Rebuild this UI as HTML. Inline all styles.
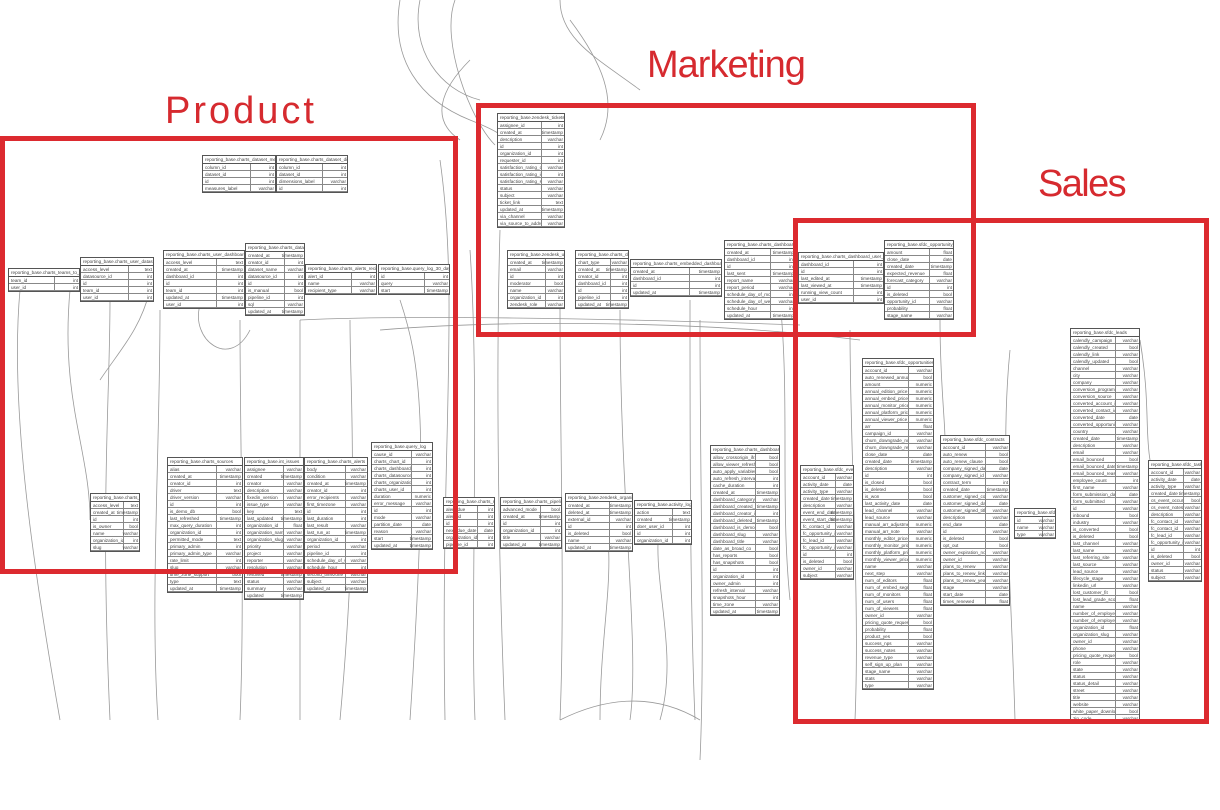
<!DOCTYPE html>
<html><head><meta charset="utf-8"><style>
html,body{margin:0;padding:0;background:#fff;width:1220px;height:810px;overflow:hidden;position:relative;font-family:"Liberation Sans",sans-serif}
svg{position:absolute;left:0;top:0}
.t{position:absolute;border:1px solid #555;background:#fff;font-size:4.6px;line-height:7px;color:#444;white-space:nowrap;overflow:hidden}
.h{height:7px;border-bottom:1px solid #555;padding-left:2px;overflow:hidden}
.b{position:relative;background:repeating-linear-gradient(to bottom,transparent 0 6px,#888 6px 7px)}
.c1{width:62%;padding-left:2px;border-right:1px solid #888;overflow:hidden}
.c2{position:absolute;right:1px;top:0;text-align:right}
.lbl{position:absolute;color:#d62a2f;font-size:38px;font-family:"Liberation Sans",sans-serif}
.box{position:absolute;border:5px solid #dc2a2f}
</style></head><body>
<svg width="1220" height="810" fill="none" stroke="#999" stroke-width="0.8">
<path d="M400 0 C390 60 420 100 470 120 S500 140 498 150"/>
<path d="M420 0 C410 50 440 90 480 100"/>
<path d="M455 0 C440 40 470 120 495 145"/>
<path d="M470 60 C440 90 430 120 460 140"/>
<path d="M560 0 C560 40 600 60 640 90"/>
<path d="M570 20 C600 60 620 100 600 140"/>
<path d="M440 160 C460 300 440 450 445 720"/>
<path d="M470 250 C480 400 470 600 475 720"/>
<path d="M500 230 C495 400 500 600 505 720"/>
<path d="M560 300 C560 450 565 600 560 720"/>
<path d="M620 310 C620 500 640 650 630 720"/>
<path d="M690 300 C690 450 690 600 695 720"/>
<path d="M700 320 C700 500 705 650 700 760"/>
<path d="M240 320 C240 450 245 600 240 720"/>
<path d="M160 310 C160 450 150 600 158 720"/>
<path d="M70 290 C60 400 90 450 90 520"/>
<path d="M20 290 C10 400 30 550 60 720"/>
<path d="M110 300 C110 400 100 500 110 720"/>
<path d="M300 320 C300 400 300 500 300 720"/>
<path d="M350 320 C350 400 360 500 340 720"/>
<path d="M400 300 C420 360 430 420 410 720"/>
<path d="M150 290 C140 330 120 350 100 380"/>
<path d="M200 305 C190 340 230 370 250 330"/>
<path d="M300 320 C400 315 600 318 800 325"/>
<path d="M380 330 C500 320 700 320 860 340"/>
<path d="M780 300 C790 400 780 500 790 600"/>
<path d="M850 330 C850 450 860 600 855 720"/>
<path d="M940 320 C940 380 945 420 945 440"/>
<path d="M1010 350 C1000 450 1010 550 1015 720"/>
<path d="M1140 340 C1150 400 1145 430 1150 460"/>
<path d="M560 720 C600 700 650 690 700 720"/>
<path d="M600 500 C620 560 600 620 600 720"/>
<path d="M660 520 C650 580 680 650 660 720"/>
</svg>

<div class="lbl" style="left:165px;top:90px;letter-spacing:3px">Product</div>
<div class="lbl" style="left:647px;top:44px;letter-spacing:-1px">Marketing</div>
<div class="lbl" style="left:1038px;top:163px;letter-spacing:-1.6px">Sales</div>

<div class="t" style="left:202px;top:155px;width:72px"><div class="h">reporting_base.charts_dataset_measures</div><div class="b"><div class="c1">column_id<br>dataset_id<br>id<br>measures_label</div><div class="c2">int<br>int<br>int<br>varchar</div></div></div>
<div class="t" style="left:276px;top:155px;width:70px"><div class="h">reporting_base.charts_dataset_dimensions</div><div class="b"><div class="c1">column_id<br>dataset_id<br>dimensions_label<br>id</div><div class="c2">int<br>int<br>varchar<br>int</div></div></div>
<div class="t" style="left:8px;top:268px;width:70px"><div class="h">reporting_base.charts_teams_to_users</div><div class="b"><div class="c1">team_id<br>user_id</div><div class="c2">int<br>int</div></div></div>
<div class="t" style="left:80px;top:257px;width:72px"><div class="h">reporting_base.charts_user_datasource_access</div><div class="b"><div class="c1">access_level<br>datasource_id<br>id<br>team_id<br>user_id</div><div class="c2">text<br>int<br>int<br>int<br>int</div></div></div>
<div class="t" style="left:163px;top:250px;width:80px"><div class="h">reporting_base.charts_user_dashboard_access</div><div class="b"><div class="c1">access_level<br>created_at<br>dashboard_id<br>id<br>team_id<br>updated_at<br>user_id</div><div class="c2">text<br>timestamp<br>int<br>int<br>int<br>timestamp<br>int</div></div></div>
<div class="t" style="left:245px;top:243px;width:58px"><div class="h">reporting_base.charts_datasets</div><div class="b"><div class="c1">created_at<br>creator_id<br>dataset_name<br>datasource_id<br>id<br>is_manual<br>pipeline_id<br>sql<br>updated_at</div><div class="c2">timestamp<br>int<br>varchar<br>int<br>int<br>bool<br>int<br>varchar<br>timestamp</div></div></div>
<div class="t" style="left:305px;top:264px;width:70px"><div class="h">reporting_base.charts_alerts_recipients</div><div class="b"><div class="c1">alert_id<br>name<br>recipient_type</div><div class="c2">int<br>varchar<br>varchar</div></div></div>
<div class="t" style="left:378px;top:264px;width:70px"><div class="h">reporting_base.query_log_30_day</div><div class="b"><div class="c1">id<br>query<br>start</div><div class="c2">int<br>varchar<br>timestamp</div></div></div>
<div class="t" style="left:90px;top:493px;width:48px"><div class="h">reporting_base.charts_alerts</div><div class="b"><div class="c1">access_level<br>created_at<br>id<br>is_owner<br>name<br>organization_id<br>slug</div><div class="c2">text<br>timestamp<br>int<br>bool<br>varchar<br>int<br>varchar</div></div></div>
<div class="t" style="left:167px;top:457px;width:74px"><div class="h">reporting_base.charts_sources</div><div class="b"><div class="c1">alias<br>created_at<br>creator_id<br>driver<br>driver_version<br>id<br>is_demo_db<br>last_refreshed<br>max_query_duration<br>organization_id<br>permitted_mode<br>primary_admin<br>primary_admin_type<br>rate_limit<br>slug<br>time_zone_support<br>type<br>updated_at</div><div class="c2">varchar<br>timestamp<br>int<br>text<br>varchar<br>int<br>bool<br>timestamp<br>int<br>int<br>text<br>int<br>varchar<br>int<br>varchar<br>bool<br>text<br>timestamp</div></div></div>
<div class="t" style="left:244px;top:457px;width:58px"><div class="h">reporting_base.int_issues</div><div class="b"><div class="c1">assignee<br>created<br>creator<br>description<br>fixedin_version<br>issue_type<br>key<br>last_updated<br>organization_id<br>organization_name<br>organization_slug<br>priority<br>project<br>reporter<br>resolution<br>resolved<br>status<br>summary<br>updated</div><div class="c2">varchar<br>timestamp<br>varchar<br>varchar<br>varchar<br>varchar<br>text<br>timestamp<br>float<br>varchar<br>varchar<br>varchar<br>varchar<br>varchar<br>varchar<br>timestamp<br>varchar<br>varchar<br>timestamp</div></div></div>
<div class="t" style="left:304px;top:457px;width:62px"><div class="h">reporting_base.charts_alerts</div><div class="b"><div class="c1">body<br>condition<br>created_at<br>creator_id<br>error_recipients<br>first_timezone<br>id<br>last_duration<br>last_result<br>last_run_at<br>organization_id<br>period<br>pipeline_id<br>schedule_day_of_week<br>schedule_hour<br>second_timezone<br>subject<br>updated_at</div><div class="c2">varchar<br>varchar<br>timestamp<br>int<br>varchar<br>varchar<br>int<br>int<br>varchar<br>timestamp<br>int<br>varchar<br>int<br>varchar<br>int<br>varchar<br>varchar<br>timestamp</div></div></div>
<div class="t" style="left:371px;top:442px;width:60px"><div class="h">reporting_base.query_log</div><div class="b"><div class="c1">cause_id<br>charts_chart_id<br>charts_dashboard_id<br>charts_datasource_id<br>charts_organization_id<br>charts_user_id<br>duration<br>error_message<br>id<br>mode<br>partition_date<br>reason<br>start<br>updated_at</div><div class="c2">varchar<br>int<br>int<br>int<br>int<br>int<br>numeric<br>varchar<br>int<br>varchar<br>date<br>varchar<br>timestamp<br>timestamp</div></div></div>
<div class="t" style="left:443px;top:497px;width:50px"><div class="h">reporting_base.charts_report</div><div class="b"><div class="c1">alert_due<br>alert_id<br>id<br>next_due_date<br>organization_id<br>pipeline_id</div><div class="c2">int<br>int<br>int<br>date<br>int<br>int</div></div></div>
<div class="t" style="left:500px;top:497px;width:60px"><div class="h">reporting_base.charts_pipelines</div><div class="b"><div class="c1">advanced_mode<br>created_at<br>id<br>organization_id<br>title<br>updated_at</div><div class="c2">bool<br>timestamp<br>int<br>int<br>varchar<br>timestamp</div></div></div>
<div class="t" style="left:565px;top:493px;width:66px"><div class="h">reporting_base.zendesk_organizations</div><div class="b"><div class="c1">created_at<br>deleted_at<br>external_id<br>id<br>is_deleted<br>name<br>updated_at</div><div class="c2">timestamp<br>timestamp<br>varchar<br>int<br>bool<br>varchar<br>timestamp</div></div></div>
<div class="t" style="left:634px;top:500px;width:56px"><div class="h">reporting_base.activity_log</div><div class="b"><div class="c1">action<br>created<br>doer_user_id<br>id<br>organization_id</div><div class="c2">text<br>timestamp<br>int<br>int<br>int</div></div></div>

<div class="t" style="left:497px;top:113px;width:66px"><div class="h">reporting_base.zendesk_tickets</div><div class="b"><div class="c1">assignee_id<br>created_at<br>description<br>id<br>organization_id<br>requester_id<br>satisfaction_rating_comment<br>satisfaction_rating_id<br>satisfaction_rating_score<br>status<br>subject<br>ticket_link<br>updated_at<br>via_channel<br>via_source_to_address</div><div class="c2">int<br>timestamp<br>varchar<br>int<br>int<br>int<br>varchar<br>int<br>varchar<br>varchar<br>varchar<br>text<br>timestamp<br>varchar<br>varchar</div></div></div>
<div class="t" style="left:507px;top:250px;width:56px"><div class="h">reporting_base.zendesk_users</div><div class="b"><div class="c1">created_at<br>email<br>id<br>moderator<br>name<br>organization_id<br>zendesk_role</div><div class="c2">timestamp<br>varchar<br>int<br>bool<br>varchar<br>int<br>varchar</div></div></div>
<div class="t" style="left:575px;top:250px;width:52px"><div class="h">reporting_base.charts_charts</div><div class="b"><div class="c1">chart_type<br>created_at<br>creator_id<br>dashboard_id<br>id<br>pipeline_id<br>updated_at</div><div class="c2">varchar<br>timestamp<br>int<br>int<br>int<br>int<br>timestamp</div></div></div>
<div class="t" style="left:630px;top:259px;width:90px"><div class="h">reporting_base.charts_embedded_dashboard_usage</div><div class="b"><div class="c1">created_at<br>dashboard_id<br>id<br>updated_at</div><div class="c2">timestamp<br>int<br>int<br>timestamp</div></div></div>
<div class="t" style="left:724px;top:240px;width:70px"><div class="h">reporting_base.charts_dashboard_reports</div><div class="b"><div class="c1">created_at<br>dashboard_id<br>id<br>last_sent<br>report_name<br>report_period<br>schedule_day_of_month<br>schedule_day_of_week<br>schedule_hour<br>updated_at</div><div class="c2">timestamp<br>int<br>int<br>timestamp<br>varchar<br>varchar<br>int<br>varchar<br>int<br>timestamp</div></div></div>
<div class="t" style="left:798px;top:252px;width:84px"><div class="h">reporting_base.charts_dashboard_user_access</div><div class="b"><div class="c1">dashboard_id<br>id<br>last_edited_at<br>last_viewed_at<br>running_view_count<br>user_id</div><div class="c2">int<br>int<br>timestamp<br>timestamp<br>int<br>int</div></div></div>
<div class="t" style="left:884px;top:240px;width:68px"><div class="h">reporting_base.sfdc_opportunity_history</div><div class="b"><div class="c1">amount<br>close_date<br>created_date<br>expected_revenue<br>forecast_category<br>id<br>is_deleted<br>opportunity_id<br>probability<br>stage_name</div><div class="c2">float<br>date<br>timestamp<br>float<br>varchar<br>int<br>bool<br>varchar<br>float<br>varchar</div></div></div>
<div class="t" style="left:710px;top:445px;width:68px"><div class="h">reporting_base.charts_dashboards</div><div class="b"><div class="c1">allow_crossorigin_iframe<br>allow_viewer_refresh<br>auto_apply_variables<br>auto_refresh_interval<br>cache_duration<br>created_at<br>dashboard_category<br>dashboard_created_at<br>dashboard_creator_id<br>dashboard_deleted_at<br>dashboard_is_demo<br>dashboard_slug<br>dashboard_title<br>date_as_broad_co<br>has_reports<br>has_snapshots<br>id<br>organization_id<br>owner_admin<br>refresh_interval<br>snapshots_hour<br>time_zone<br>updated_at</div><div class="c2">bool<br>bool<br>bool<br>int<br>int<br>timestamp<br>varchar<br>timestamp<br>int<br>timestamp<br>bool<br>varchar<br>varchar<br>bool<br>bool<br>bool<br>int<br>int<br>int<br>varchar<br>int<br>varchar<br>timestamp</div></div></div>

<div class="t" style="left:800px;top:465px;width:52px"><div class="h">reporting_base.sfdc_events</div><div class="b"><div class="c1">account_id<br>activity_date<br>activity_type<br>created_date<br>description<br>event_end_date<br>event_start_date<br>fc_contact_id<br>fc_opportunity_id<br>fc_lead_id<br>fc_opportunity_id<br>id<br>is_deleted<br>owner_id<br>subject</div><div class="c2">varchar<br>date<br>varchar<br>timestamp<br>varchar<br>timestamp<br>timestamp<br>varchar<br>varchar<br>varchar<br>varchar<br>int<br>bool<br>varchar<br>varchar</div></div></div>
<div class="t" style="left:862px;top:358px;width:70px"><div class="h">reporting_base.sfdc_opportunities</div><div class="b"><div class="c1">account_id<br>auto_renewed_annual<br>amount<br>annual_edition_price<br>annual_embed_price<br>annual_monitor_price<br>annual_platform_price<br>annual_viewer_price<br>arr<br>campaign_id<br>churn_downgrade_notes<br>churn_downgrade_reason<br>close_date<br>created_date<br>description<br>id<br>is_closed<br>is_deleted<br>is_won<br>last_activity_date<br>lead_channel<br>lead_source<br>manual_arr_adjustment<br>manual_arr_note<br>monthly_editor_price<br>monthly_monitor_price<br>monthly_platform_price<br>monthly_viewer_price<br>name<br>next_step<br>num_of_editors<br>num_of_embed_segments<br>num_of_monitors<br>num_of_users<br>num_of_viewers<br>owner_id<br>pricing_quote_requested<br>probability<br>product_yes<br>success_nps<br>success_notes<br>revenue_type<br>self_sign_up_plan<br>stage_name<br>stats<br>type</div><div class="c2">varchar<br>bool<br>numeric<br>numeric<br>numeric<br>numeric<br>numeric<br>numeric<br>float<br>varchar<br>varchar<br>varchar<br>date<br>timestamp<br>varchar<br>int<br>bool<br>bool<br>bool<br>date<br>varchar<br>varchar<br>numeric<br>varchar<br>numeric<br>numeric<br>numeric<br>numeric<br>varchar<br>varchar<br>float<br>float<br>float<br>float<br>float<br>varchar<br>bool<br>float<br>bool<br>varchar<br>varchar<br>varchar<br>varchar<br>varchar<br>varchar<br>varchar</div></div></div>
<div class="t" style="left:940px;top:435px;width:68px"><div class="h">reporting_base.sfdc_contracts</div><div class="b"><div class="c1">account_id<br>auto_renew<br>auto_renew_clause<br>company_signed_date<br>company_signed_id<br>contract_term<br>created_date<br>customer_signed_contact<br>customer_signed_date<br>customer_signed_title<br>description<br>end_date<br>id<br>is_deleted<br>opt_out<br>owner_expiration_notice<br>owner_id<br>plans_to_renew<br>plans_to_renew_link<br>plans_to_renew_year<br>stage<br>start_date<br>times_renewed</div><div class="c2">varchar<br>bool<br>bool<br>date<br>varchar<br>int<br>timestamp<br>varchar<br>date<br>varchar<br>varchar<br>date<br>varchar<br>bool<br>bool<br>varchar<br>varchar<br>varchar<br>varchar<br>varchar<br>varchar<br>date<br>float</div></div></div>
<div class="t" style="left:1014px;top:508px;width:40px"><div class="h">reporting_base.sfdc_users</div><div class="b"><div class="c1">id<br>name<br>type</div><div class="c2">varchar<br>varchar<br>varchar</div></div></div>
<div class="t" style="left:1070px;top:328px;width:68px"><div class="h">reporting_base.sfdc_leads</div><div class="b"><div class="c1">calendly_campaign<br>calendly_created<br>calendly_link<br>calendly_updated<br>channel<br>city<br>company<br>conversion_program<br>conversion_source<br>converted_account_id<br>converted_contact_id<br>converted_date<br>converted_opportunity_id<br>country<br>created_date<br>description<br>email<br>email_bounced<br>email_bounced_date<br>email_bounced_reason<br>employee_count<br>first_name<br>form_submission_date<br>form_submitted<br>id<br>inbound<br>industry<br>is_converted<br>is_deleted<br>last_channel<br>last_name<br>last_referring_site<br>last_source<br>lead_source<br>lifecycle_stage<br>linkedin_url<br>lost_customer_fit<br>lost_lead_grade_score<br>name<br>number_of_employees<br>number_of_employees_bucket<br>organization_id<br>organization_slug<br>owner_id<br>phone<br>pricing_quote_requested<br>role<br>state<br>status<br>status_detail<br>street<br>title<br>website<br>white_paper_download<br>zip_code</div><div class="c2">varchar<br>bool<br>varchar<br>bool<br>varchar<br>varchar<br>varchar<br>varchar<br>varchar<br>varchar<br>varchar<br>date<br>varchar<br>varchar<br>timestamp<br>varchar<br>varchar<br>bool<br>timestamp<br>varchar<br>int<br>varchar<br>date<br>varchar<br>varchar<br>bool<br>varchar<br>bool<br>bool<br>varchar<br>varchar<br>varchar<br>varchar<br>varchar<br>varchar<br>varchar<br>bool<br>float<br>varchar<br>varchar<br>varchar<br>float<br>varchar<br>varchar<br>varchar<br>bool<br>varchar<br>varchar<br>varchar<br>varchar<br>varchar<br>varchar<br>varchar<br>bool<br>varchar</div></div></div>
<div class="t" style="left:1148px;top:460px;width:52px"><div class="h">reporting_base.sfdc_tasks</div><div class="b"><div class="c1">account_id<br>activity_date<br>activity_type<br>created_date<br>cs_event_occurred<br>cs_event_notes<br>description<br>fc_contact_id<br>fc_contact_id<br>fc_lead_id<br>fc_opportunity_id<br>id<br>is_deleted<br>owner_id<br>status<br>subject</div><div class="c2">varchar<br>date<br>varchar<br>timestamp<br>bool<br>varchar<br>varchar<br>varchar<br>varchar<br>varchar<br>varchar<br>int<br>bool<br>varchar<br>varchar<br>varchar</div></div></div>

<div class="box" style="left:0;top:136px;width:448px;height:428px"></div>
<div class="box" style="left:476px;top:103px;width:490px;height:224px"></div>
<div class="box" style="left:793px;top:218px;width:406px;height:496px"></div>
</body></html>
